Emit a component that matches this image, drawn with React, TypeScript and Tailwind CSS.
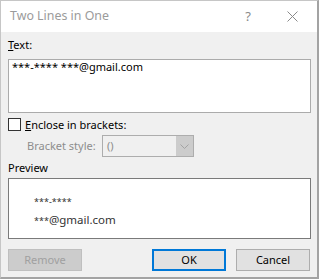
const font = { fontFamily: '"Segoe UI", "Noto Sans", "Liberation Sans", sans-serif' };

export default function App() {
  return (
    <div className="w-[319px] h-[279px] bg-white" style={font}>
      <div className="flex h-full w-full flex-col border-l border-t border-[#c6c6c6] border-r-2 border-b-2 border-r-[#a3a3a3] border-b-[#a3a3a3]">
        <div className="flex h-[31px] shrink-0 items-center bg-white pl-[9px]">
          <span className="text-[12.4px] text-[#9b9b9b]">Two Lines in One</span>
          <span className="ml-auto mr-[36px] text-[13px] text-[#8a8a8a]">?</span>
          <svg width="11" height="11" viewBox="0 0 11 11" className="mr-[19px]">
            <path d="M0.5 0.5 L10.5 10.5 M10.5 0.5 L0.5 10.5" stroke="#8a8a8a" strokeWidth="1" />
          </svg>
        </div>

        <div className="flex flex-1 flex-col bg-[#f0f0f0] pl-[7px] pr-[6px] text-[11px] text-black">
          <div className="mt-[5px] h-[16px] leading-[16px]">
            <span className="underline">T</span>ext:
          </div>
          <div className="mt-[6px] h-[54px] border border-[#ababab] bg-white pl-[3px] leading-[14px]">
            ***-**** ***@gmail.com
          </div>

          <div className="mt-[5px] flex h-[13px] items-center">
            <div className="h-[13px] w-[13px] border border-[#333] bg-white" />
            <span className="ml-[4px] leading-[13px]">
              <span className="underline">E</span>nclose in brackets:
            </span>
          </div>

          <div className="mt-[4px] flex h-[22px] items-center">
            <span className="ml-[19px] w-[75px] text-[#8d8d8d]">Bracket style:</span>
            <div className="flex h-[22px] w-[92px] border border-[#adadad] bg-[#f0f0f0]">
              <span className="flex-1 pl-[4px] leading-[20px] text-[#8d8d8d]">()</span>
              <div className="flex w-[17px] items-center justify-center bg-[#cccccc]">
                <svg width="9" height="5" viewBox="0 0 9 5">
                  <path d="M0.5 0.5 L4.5 4.5 L8.5 0.5" stroke="#a3a3a3" fill="none" />
                </svg>
              </div>
            </div>
          </div>

          <div className="mt-[2px] h-[17px] leading-[17px]">Preview</div>
          <div className="mt-[2px] h-[61px] border border-[#7a7a7a] bg-white pl-[25px] text-[#333]">
            <div className="mt-[18px] h-[10px] text-[9px] leading-[10px]">***-****</div>
            <div className="mt-[5px] flex items-baseline leading-[16px]">
              <span className="text-[9px]">***</span>
              <span className="text-[11.5px]">@gmail.com</span>
            </div>
          </div>

          <div className="mt-[10px] flex">
            <button className="h-[22px] w-[74px] border border-[#bfbfbf] bg-[#cccccc] text-[11px] text-[#a0a0a0]">
              Remove
            </button>
            <button className="ml-[70px] h-[22px] w-[74px] border-2 border-[#0078d7] bg-[#e1e1e1] text-[11px]">
              OK
            </button>
            <button className="ml-[10px] h-[22px] w-[74px] border border-[#adadad] bg-[#e1e1e1] text-[11px]">
              Cancel
            </button>
          </div>
        </div>
      </div>
    </div>
  );
}
